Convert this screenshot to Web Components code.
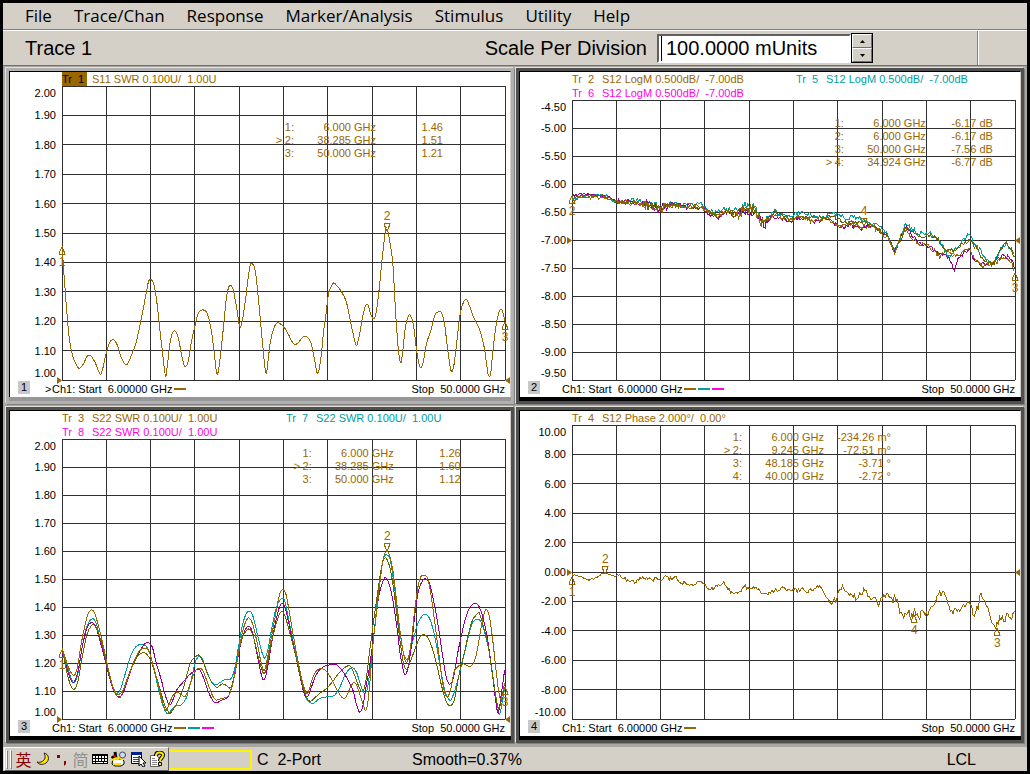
<!DOCTYPE html>
<html lang="en">
<head>
<meta charset="utf-8">
<title>Network Analyzer</title>
<style>
    body {
        margin: 0;
        background: #000;
    }
</style>
</head>
<body>
<analyzer-app></analyzer-app>

<script>
const BROWN = '#996600';
const TEAL = '#009e9e';
const MAGENTA = '#ff00e6';
const PURPLE = '#960096';
const OLIVE = '#666600';

/* Every plot is 1330 units wide; x and y of a trace are shifted by its origin. */
const PLOT_WIDTH = 1330;

const windows = [
    {
        id: 1,
        active: true,
        height: 880,
        legend: [{ name: 'Tr  1', text: 'S11 SWR 0.100U/  1.00U', color: BROWN, selected: true }],
        scale: ['2.00', '1.90', '1.80', '1.70', '1.60', '1.50', '1.40', '1.30', '1.20', '1.10', '1.00'],
        reference: 100,
        readout: {
            top: 12,
            right: 14,
            rows: [
                ['', '1:', '6.000 GHz', '1.46'],
                ['>', '2:', '38.285 GHz', '1.51'],
                ['', '3:', '50.000 GHz', '1.21'],
            ],
        },
        markers: [
            { label: '1', x: 0, y: 478, dir: 'up' },
            { label: '2', x: 976, y: 437, dir: 'down' },
            { label: '3', x: 1330, y: 704, dir: 'up' },
        ],
        origin: [187, -339],
        traces: [
            {
                color: BROWN,
                points: `187,140 190,180 194,240 205,380 211,430 218,465 228,492 238,506 250,495 263,469 274,469
                    287,490 301,523 309,508 320,460 331,427 342,421 353,436 366,476 381,496 393,473 409,430 425,358
                    440,280 447,246 455,240 463,256 472,310 482,400 490,470 498,529 504,490 513,420 520,398 528,395
                    536,415 545,460 551,488 557,501 566,485 576,425 587,375 597,340 610,331 622,340 634,385 643,450
                    652,522 660,490 670,400 680,300 686,268 693,257 702,275 712,330 718,370 723,382 730,355 738,300
                    746,235 752,197 758,193 767,213 777,300 788,420 799,520 806,480 812,430 820,395 830,372 840,371
                    855,385 868,407 880,430 890,434 900,425 910,412 922,411 935,432 945,480 955,522 965,470 972,400
                    980,340 987,285 995,262 1003,250 1013,260 1025,275 1040,305 1052,360 1065,420 1072,437 1080,405
                    1090,350 1098,320 1106,317 1114,345 1123,358 1130,340 1138,280 1148,180 1156,110 1161,85
                    1168,110 1180,190 1188,330 1196,440 1204,490 1210,455 1217,390 1225,355 1232,347 1242,375
                    1250,440 1257,485 1264,505 1272,485 1282,430 1295,390 1307,345 1316,338 1325,337 1335,370
                    1345,450 1355,513 1363,500 1372,430 1380,360 1388,320 1400,300 1410,318 1422,352 1440,388
                    1455,445 1466,522 1474,522 1480,460 1490,380 1500,335 1508,332 1517,365`,
            },
        ],
    },
    {
        id: 2,
        height: 840,
        legend: [
            { name: 'Tr  2', text: 'S12 LogM 0.500dB/  -7.00dB', color: BROWN },
            { name: 'Tr  5', text: 'S12 LogM 0.500dB/  -7.00dB', color: TEAL },
            { name: 'Tr  6', text: 'S12 LogM 0.500dB/  -7.00dB', color: MAGENTA },
        ],
        scale: ['-4.50', '-5.00', '-5.50', '-6.00', '-6.50', '-7.00', '-7.50', '-8.00', '-8.50', '-9.00', '-9.50'],
        reference: 50,
        readout: {
            top: 6,
            right: 5,
            rows: [
                ['', '1:', '6.000 GHz', '-6.17 dB'],
                ['', '2:', '6.000 GHz', '-6.17 dB'],
                ['', '3:', '50.000 GHz', '-7.56 dB'],
                ['>', '4:', '34.924 GHz', '-6.77 dB'],
            ],
        },
        markers: [
            { label: '2', x: 0, y: 286, dir: 'up' },
            { label: '4', x: 877, y: 382, dir: 'down' },
            { label: '3', x: 1330, y: 516, dir: 'up' },
        ],
        origin: [37, -209],
        noise: (x) => ((x > 215 && x < 285) || (x > 480 && x < 590) ? 15 : x < 130 ? 4 : 7),
        traces: [
            {
                color: TEAL,
                points: `37,90 60,78 90,78 120,76 145,80 165,94 190,96 215,92 240,93 260,105 290,110 320,106 350,104
                    380,104 410,102 425,104 440,120 470,128 490,120 505,118 520,128 540,118 560,110 585,112 600,135
                    615,155 630,138 645,122 660,132 685,138 710,133 740,132 770,142 800,142 820,132 840,135 865,148
                    880,142 905,148 930,158 955,168 980,190 995,220 1006,245 1020,210 1035,170 1042,165 1055,178
                    1070,185 1090,192 1110,188 1130,200 1150,228 1165,258 1175,255 1195,235 1210,210 1225,198
                    1240,210 1260,240 1280,265 1300,282 1315,260 1330,230 1340,222 1355,240 1367,265`,
            },
            {
                color: PURPLE,
                points: `37,80 60,72 90,76 120,76 150,84 170,96 190,90 220,98 250,102 275,112 305,116 340,102 370,110
                    400,112 430,115 450,138 475,146 500,128 530,140 550,126 585,122 600,145 615,165 635,138 660,145
                    690,155 730,142 765,158 790,148 815,152 840,175 870,168 905,178 935,170 960,182 985,202 1006,245
                    1025,200 1040,175 1060,200 1085,225 1115,230 1140,255 1160,255 1175,275 1185,297 1195,265
                    1215,248 1230,238 1245,270 1265,283 1290,287 1310,270 1335,255 1355,268 1367,295`,
            },
            {
                color: OLIVE,
                points: `37,88 60,80 90,80 120,77 145,82 165,95 190,98 220,96 250,102 270,112 300,114 330,106 360,106
                    390,110 425,110 440,122 465,136 485,132 505,120 525,132 545,122 580,118 600,138 615,160 630,145
                    645,124 665,140 690,146 730,140 760,144 790,145 820,140 850,155 880,158 910,158 935,168 960,178
                    985,200 1006,250 1020,215 1040,175 1060,190 1085,205 1110,195 1130,202 1145,220 1160,240
                    1180,242 1200,230 1215,218 1230,212 1250,235 1270,270 1300,287 1320,245 1340,220 1355,235
                    1367,270`,
            },
            {
                color: BROWN,
                points: `37,100 60,82 90,84 120,85 150,87 175,98 210,99 240,102 265,112 300,118 330,108 365,110
                    400,112 430,114 450,130 475,142 500,125 530,140 550,124 585,120 600,148 615,168 635,138 660,142
                    690,152 730,140 765,156 800,146 840,168 870,162 905,172 935,170 960,185 985,205 1006,250
                    1025,195 1040,180 1060,210 1085,225 1110,230 1140,260 1160,240 1185,260 1205,250 1230,235
                    1245,265 1265,290 1290,285 1310,278 1335,260 1355,275 1367,305`,
            },
        ],
    },
    {
        id: 3,
        height: 840,
        legend: [
            { name: 'Tr  3', text: 'S22 SWR 0.100U/  1.00U', color: BROWN },
            { name: 'Tr  7', text: 'S22 SWR 0.100U/  1.00U', color: TEAL },
            { name: 'Tr  8', text: 'S22 SWR 0.100U/  1.00U', color: MAGENTA },
        ],
        scale: ['2.00', '1.90', '1.80', '1.70', '1.60', '1.50', '1.40', '1.30', '1.20', '1.10', '1.00'],
        reference: 100,
        readout: {
            top: 3,
            right: 10,
            rows: [
                ['', '1:', '6.000 GHz', '1.26'],
                ['>', '2:', '38.285 GHz', '1.60'],
                ['', '3:', '50.000 GHz', '1.12'],
            ],
        },
        markers: [
            { label: '1', x: 0, y: 630, dir: 'up' },
            { label: '2', x: 977, y: 339, dir: 'down' },
            { label: '3', x: 1330, y: 742, dir: 'up' },
        ],
        origin: [37, -242],
        traces: [
            {
                color: TEAL,
                points: `37,390 50,430 62,470 74,488 86,455 98,380 112,320 127,298 138,308 150,350 162,400 175,450
                    188,500 200,520 212,510 226,465 243,410 258,382 275,374 290,380 303,408 318,470 332,530 345,570
                    356,583 365,572 380,557 396,555 410,535 425,480 438,425 450,410 460,420 472,455 485,485 498,496
                    512,488 525,480 543,478 555,450 567,380 578,320 590,282 602,275 612,295 625,350 638,400 647,415
                    655,390 668,320 680,265 692,240 703,238 710,262 725,335 740,410 755,480 770,535 782,549 793,550
                    810,537 830,532 855,527 870,505 885,470 898,450 910,444 922,460 935,500 946,522 955,500 965,420
                    975,330 985,230 995,150 1004,112 1012,106 1022,120 1035,200 1048,310 1060,390 1072,420 1082,395
                    1094,350 1105,312 1117,290 1130,284 1140,295 1150,325 1162,380 1174,450 1186,510 1200,541
                    1210,530 1223,490 1238,430 1250,380 1262,330 1272,305 1282,300 1294,305 1308,345 1322,410
                    1335,500 1345,560 1351,583 1358,550 1366,505`,
            },
            {
                color: PURPLE,
                points: `37,395 50,440 62,478 73,488 86,450 98,380 112,325 125,309 138,320 150,360 165,415 180,475
                    195,518 208,532 220,520 236,475 252,430 270,395 285,373 297,370 308,382 320,430 335,480 348,530
                    360,556 370,540 382,510 400,488 420,465 440,451 452,452 464,480 478,520 490,543 500,550 515,542
                    535,532 548,495 560,440 572,380 585,335 597,320 608,335 620,390 634,460 644,480 655,440 668,360
                    682,290 692,258 701,252 710,275 725,345 740,415 755,485 765,525 775,530 785,505 800,465 820,442
                    840,436 860,435 875,448 895,480 910,510 920,550 930,577 940,560 950,500 962,430 975,330 988,230
                    1000,185 1008,174 1018,190 1030,240 1042,320 1052,400 1060,445 1067,465 1077,440 1087,370
                    1098,270 1108,210 1120,182 1130,178 1140,190 1150,230 1165,310 1180,410 1190,470 1200,493
                    1212,475 1225,400 1240,330 1252,285 1265,258 1278,251 1290,262 1305,310 1318,380 1330,470
                    1340,550 1347,580 1355,530 1366,450`,
            },
            {
                color: OLIVE,
                points: `37,385 50,450 62,495 74,509 86,480 98,410 112,345 125,318 135,317 148,345 160,385 175,450
                    190,505 205,532 215,528 232,480 250,435 268,405 285,400 298,412 315,455 330,505 345,555 360,580
                    370,570 385,545 400,510 412,465 425,425 440,410 450,407 462,430 475,465 488,490 502,503 518,493
                    530,497 543,504 555,470 567,400 580,350 592,332 602,330 614,360 628,420 640,458 648,455 658,410
                    670,350 682,305 692,280 700,276 710,300 725,355 740,415 755,480 770,530 782,545 795,535 810,522
                    830,507 850,485 870,458 890,441 903,440 915,465 930,505 940,515 950,480 960,400 973,300 985,215
                    995,150 1002,120 1012,118 1025,160 1038,250 1050,350 1062,430 1072,448 1085,420 1098,385
                    1110,355 1123,345 1136,355 1150,390 1163,440 1177,500 1190,545 1202,558 1215,540 1230,460
                    1245,400 1258,340 1270,300 1282,285 1290,280 1302,320 1315,370 1330,470 1342,545 1350,565
                    1358,530 1366,490`,
            },
            {
                color: BROWN,
                points: `37,385 50,425 62,455 74,467 84,440 95,370 110,300 118,277 127,271 136,282 148,325 160,375
                    172,430 185,485 197,517 208,524 220,512 235,475 252,428 268,395 285,385 298,395 310,435 325,490
                    338,545 350,573 358,555 370,528 382,519 395,524 406,531 416,510 430,470 440,450 455,447 465,465
                    478,500 490,530 500,541 515,537 535,530 548,500 560,440 570,380 582,325 592,300 600,296 610,315
                    622,365 634,425 644,453 655,410 668,340 680,275 690,225 698,211 706,215 712,235 725,310 740,395
                    755,470 768,515 775,520 785,490 795,462 808,448 820,447 835,460 850,485 865,515 880,535 890,532
                    902,505 914,488 925,505 938,545 948,572 955,550 962,480 970,380 980,290 990,200 1000,125 1008,98
                    1018,100 1030,150 1040,230 1050,320 1060,390 1068,425 1076,420 1085,370 1095,280 1105,205
                    1114,172 1124,168 1134,175 1144,220 1155,300 1168,400 1178,480 1188,525 1196,530 1205,505
                    1215,455 1230,437 1245,433 1262,441 1275,425 1285,385 1295,325 1305,280 1312,270 1320,290
                    1330,360 1340,450 1348,515 1354,540 1360,520 1366,490`,
            },
        ],
    },
    {
        id: 4,
        height: 882,
        legend: [{ name: 'Tr  4', text: 'S12 Phase 2.000°/  0.00°', color: BROWN }],
        scale: ['10.00', '8.00', '6.00', '4.00', '2.00', '0.00', '-2.00', '-4.00', '-6.00', '-8.00', '-10.00'],
        reference: 50,
        readout: {
            top: 2,
            right: 28,
            rows: [
                ['', '1:', '6.000 GHz', '-234.26 m°'],
                ['>', '2:', '9.245 GHz', '-72.51 m°'],
                ['', '3:', '48.185 GHz', '-3.71 °'],
                ['', '4:', '40.000 GHz', '-2.72 °'],
            ],
        },
        markers: [
            { label: '1', x: 0, y: 454, dir: 'up' },
            { label: '2', x: 100, y: 449, dir: 'down' },
            { label: '4', x: 1028, y: 566, dir: 'up' },
            { label: '3', x: 1277, y: 606, dir: 'up' },
        ],
        origin: [172, -344],
        noise: (x) => (x < 130 ? 2 : x < 750 ? 6 : x < 950 ? 9 : 14),
        traces: [
            {
                color: BROWN,
                points: `172,105 190,108 205,113 220,121 235,118 250,112 262,102 270,100 285,105 305,110 318,104
                    322,115 335,120 345,126 365,127 375,117 390,112 400,118 415,122 425,117 440,120 450,108 457,112
                    465,118 485,115 495,125 510,130 525,138 540,132 552,126 567,132 575,145 590,148 600,142 612,138
                    628,131 640,145 650,160 662,164 680,153 690,140 700,147 715,144 730,147 745,160 757,163 770,155
                    790,150 805,143 820,150 835,146 850,155 862,150 880,158 895,148 910,138 920,143 930,160 940,185
                    950,198 960,182 968,178 973,150 985,143 998,152 1010,175 1020,170 1028,180 1040,160 1052,150
                    1062,170 1072,172 1085,182 1093,203 1100,180 1108,172 1123,163 1135,178 1145,172 1155,205
                    1163,215 1171,236 1180,218 1190,235 1197,220 1208,210 1217,228 1225,215 1235,218 1248,210
                    1255,188 1265,180 1268,165 1280,160 1290,160 1300,185 1310,215 1322,222 1335,210 1345,200
                    1355,188 1367,208 1380,218 1392,198 1402,162 1415,185 1425,215 1435,245 1447,258 1460,238
                    1475,238 1482,220 1490,240 1502,225`,
            },
        ],
    },
];

function parsePoints(text, [ox, oy]) {
    return text.trim().split(/\s+/).map((pair) => {
        const [x, y] = pair.split(',').map(Number);
        return [x - ox, y - oy];
    });
}

/* Catmull-Rom spline through the points, written as cubic segments */
function smoothPath(pts) {
    let d = `M${pts[0]}`;
    for (let i = 0; i < pts.length - 1; i++) {
        const p0 = pts[i - 1] || pts[i];
        const p1 = pts[i];
        const p2 = pts[i + 1];
        const p3 = pts[i + 2] || p2;
        d += `C${p1[0] + (p2[0] - p0[0]) / 6},${p1[1] + (p2[1] - p0[1]) / 6} `
            + `${p2[0] - (p3[0] - p1[0]) / 6},${p2[1] - (p3[1] - p1[1]) / 6} ${p2}`;
    }
    return d;
}

/* Straight segments with repeatable measurement noise on top */
function noisyPath(pts, amplitude, seed) {
    let state = seed * 7919;
    const random = () => {
        state = (state * 1103515245 + 12345) % 2147483648;
        return state / 2147483648 - 0.5;
    };
    let d = `M${pts[0]}`;
    let i = 0;
    for (let x = pts[0][0] + 4; x <= PLOT_WIDTH; x += 4) {
        while (i < pts.length - 2 && pts[i + 1][0] < x) i++;
        const [x1, y1] = pts[i];
        const [x2, y2] = pts[i + 1];
        const y = y1 + (y2 - y1) * (x - x1) / (x2 - x1) + random() * 2 * amplitude(x);
        d += `L${x},${y.toFixed(1)}`;
    }
    return d;
}

function define(name, html, setup) {
    const template = document.createElement('template');
    template.innerHTML = html;

    customElements.define(name, class extends HTMLElement {
        constructor() {
            super();
            this.attachShadow({ mode: 'open' });
            this.shadowRoot.appendChild(template.content.cloneNode(true));
            if (setup) setup(this, this.shadowRoot);
        }
    });
}

define('menu-bar', `
    <style>
        :host {
            display: flex;
            align-items: center;
            gap: 22px;
            height: 26px;
            padding: 0 22px;
            border-bottom: 1px solid #808080;
            box-shadow: 0 1px 0 #fff;
            margin-bottom: 1px;
            background: #d4d0c8;
        }
        ::slotted(button) {
            border: 0;
            padding: 0;
            background: none;
            color: #000;
            font: 17px/24px "Open Sans", sans-serif;
        }
    </style>
    <slot></slot>
`);

define('scale-toolbar', `
    <style>
        :host {
            display: flex;
            align-items: center;
            height: 34px;
            background: #d4d0c8;
            font-size: 20px;
        }
        .title {
            margin-left: 22px;
            flex: 1;
        }
        label { margin-right: 10px; }
        input {
            box-sizing: border-box;
            width: 194px;
            height: 29px;
            border: 2px solid;
            border-color: #606060 #fff #fff #606060;
            border-radius: 0;
            padding: 0 0 0 7px;
            background: linear-gradient(#000, #000) 2px 0 / 1px 100% no-repeat #fff;
            font: 20px "Liberation Sans", Arial, sans-serif;
            color: #000;
            outline: 0;
        }
        .spin {
            display: grid;
            grid-template-rows: 1fr 1fr;
            box-sizing: border-box;
            width: 22px;
            height: 30px;
            border: 1px solid #000;
        }
        .spin button {
            display: flex;
            align-items: center;
            justify-content: center;
            padding: 0;
            border: 1px solid;
            border-color: #fff #707070 #707070 #fff;
            background: #d4d0c8;
        }
        .end {
            align-self: stretch;
            width: 49px;
            margin-left: 104px;
            border-left: 1px solid #808080;
            box-shadow: inset 1px 0 0 #fff;
        }
    </style>
    <span class="title"><slot></slot></span>
    <label for="scale">Scale Per Division</label>
    <input id="scale" type="text" value="100.0000 mUnits">
    <span class="spin">
        <button type="button" aria-label="Increase"><svg width="5" height="3"><path d="M0 3L2.500 0L5 3z"/></svg></button>
        <button type="button" aria-label="Decrease"><svg width="5" height="3"><path d="M0 0L2.500 3L5 0z"/></svg></button>
    </span>
    <span class="end"></span>
`, (host, root) => {
    const input = root.querySelector('input');
    const [up, down] = root.querySelectorAll('button');
    const step = (delta) => {
        input.value = `${(parseFloat(input.value) + delta).toFixed(4)} mUnits`;
    };
    up.addEventListener('click', () => step(10));
    down.addEventListener('click', () => step(-10));
});

define('plot-marker', `
    <style>
        :host {
            position: absolute;
            display: flex;
            flex-direction: column;
            align-items: center;
            transform: translateX(-50%);
            color: #996600;
            font-size: 12px;
            line-height: 12px;
        }
        :host([dir="down"]) {
            flex-direction: column-reverse;
            transform: translate(-50%, -100%);
        }
        :host([dir="down"]) svg { transform: scaleY(-1); }
        svg { display: block; margin: 1px 0; }
    </style>
    <svg width="7" height="8" fill="none" stroke="currentColor" shape-rendering="crispEdges"><path d="M3.500 0L1 5.500V7.500H6V5.500zM0 7.500H7"/></svg>
    <slot></slot>
`);

define('trace-window', `
    <style>
        :host {
            --frame: #505050;
            --strip: #000;
            display: flex;
            flex-direction: column;
            min-width: 0;
            border: 3px solid var(--frame);
            box-shadow: -1px -1px 0 #e4e0d8, 1px 1px 0 #808080;
            font-size: 11px;
            line-height: 14px;
        }
        :host([active]) {
            --frame: #b0b0b0;
            --strip: #979797;
        }
        section {
            flex: 1;
            display: grid;
            grid-template-columns: 52px minmax(0, 1fr);
            grid-template-rows: auto minmax(0, 1fr) 17px;
            padding-right: 5px;
            border: 1px solid #000;
            border-right-color: #d4d0c8;
            border-bottom: 0;
            background: #fff;
        }
        .strip {
            height: 4px;
            background: var(--strip);
        }
        .legend {
            grid-column: 2;
            display: grid;
            grid-template-columns: 224px 1fr;
            white-space: pre;
        }
        .legend div { display: flex; }
        .legend b {
            font-weight: normal;
            width: 25px;
            margin-right: 5px;
        }
        .legend .selected {
            background: #996600;
            color: #000;
        }
        .scale {
            display: grid;
            grid-template-rows: 1fr repeat(9, 2fr) 1fr;
            align-items: center;
            justify-items: end;
            padding-right: 6px;
        }
        .scale span { margin: -7px 0; }
        .scale span:first-child { align-self: start; margin: 0; }
        .scale span:last-child { align-self: end; margin: 0; }
        .plot { position: relative; }
        .plot > svg {
            position: absolute;
            width: 100%;
            height: 100%;
            overflow: visible;
        }
        path, line { vector-effect: non-scaling-stroke; }
        .grid { stroke: #303034; }
        table {
            position: absolute;
            border-collapse: collapse;
            color: #996600;
            line-height: 13px;
            white-space: nowrap;
            text-align: right;
        }
        td { padding: 0; }
        td:nth-child(1) { width: 9px; text-align: left; }
        td:nth-child(2) { width: 9px; text-align: left; }
        td:nth-child(3) { width: 82px; }
        td:nth-child(4) { width: 67px; }
        .ref {
            position: absolute;
            width: 5px;
            height: 7px;
            margin-top: -3px;
            background: #996600;
        }
        .ref.left { right: 100%; clip-path: polygon(0 0, 100% 50%, 0 100%); }
        .ref.right { left: 100%; clip-path: polygon(100% 0, 0 50%, 100% 100%); }
        footer {
            grid-column: 1 / 3;
            display: flex;
            align-items: center;
            white-space: pre;
        }
        .badge {
            width: 12px;
            margin: 0 15px 3px 8px;
            background: #c8c8c8;
            text-align: center;
            line-height: 13px;
        }
        .caret { width: 7px; }
        .dash {
            width: 12px;
            height: 2px;
            margin-right: 2px;
        }
        .dash:first-of-type { margin-left: 2px; }
        .stop { margin-left: auto; }
    </style>
    <section>
        <div class="legend"></div>
        <div class="scale"></div>
        <div class="plot"></div>
        <footer></footer>
    </section>
    <div class="strip"></div>
`, (host, root) => {
    host.render = (data) => {
        host.toggleAttribute('active', Boolean(data.active));

        root.querySelector('.legend').innerHTML = data.legend.map((item) =>
            `<div style="color: ${item.color}"><b class="${item.selected ? 'selected' : ''}">${item.name}</b>${item.text}</div>`).join('');

        root.querySelector('.scale').innerHTML = data.scale.map((text) => `<span>${text}</span>`).join('');

        let grid = '';
        for (let i = 0; i <= 10; i++) {
            const x = PLOT_WIDTH * i / 10;
            const y = data.height * i / 10;
            grid += `<line x1="${x}" y1="0" x2="${x}" y2="${data.height}"/><line x1="0" y1="${y}" x2="${PLOT_WIDTH}" y2="${y}"/>`;
        }
        const traces = data.traces.map((trace, i) => {
            const pts = parsePoints(trace.points, data.origin);
            const d = data.noise ? noisyPath(pts, data.noise, i + 3) : smoothPath(pts);
            return `<path d="${d}" stroke="${trace.color}"/>`;
        }).join('');
        const rows = data.readout.rows.map((row) =>
            `<tr>${row.map((cell) => `<td>${cell.replace('>', '&gt;')}</td>`).join('')}</tr>`).join('');
        const markers = data.markers.map((m) =>
            `<plot-marker dir="${m.dir}" style="left: ${m.x / PLOT_WIDTH * 100}%; top: ${m.y / data.height * 100}%">${m.label}</plot-marker>`).join('');

        root.querySelector('.plot').innerHTML = `
            <svg viewBox="0 0 ${PLOT_WIDTH} ${data.height}" preserveAspectRatio="none" fill="none" shape-rendering="crispEdges">
                <g class="grid">${grid}</g>${traces}
            </svg>
            <table style="top: ${data.readout.top}%; right: ${data.readout.right}%">${rows}</table>
            <span class="ref left" style="top: ${data.reference}%"></span>
            <span class="ref right" style="top: ${data.reference}%"></span>
            ${markers}`;

        root.querySelector('footer').innerHTML = `
            <span class="badge">${data.id}</span><span class="caret">${data.active ? '&gt;' : ''}</span>Ch1: Start  6.00000 GHz<i class="dash" style="background: ${BROWN}"></i>${
            data.legend.slice(1).map((item) => `<i class="dash" style="background: ${item.color}"></i>`).join('')
        }<span class="stop">Stop  50.0000 GHz</span>`.trim();
    };
});

define('input-bar', `
    <style>
        :host {
            display: flex;
            align-items: center;
            box-sizing: border-box;
            width: 165px;
            height: 24px;
            border: 1px solid;
            border-color: #fff #606060 #606060 #fff;
            background: #d4d0c8;
        }
        .grip {
            width: 2px;
            height: 19px;
            border: 1px solid;
            border-color: #fff #808080 #808080 #fff;
            box-sizing: border-box;
            margin-left: 1px;
        }
        .grip + .grip { margin: 0 2px 0 2px; }
        button {
            display: flex;
            align-items: center;
            justify-content: center;
            width: 19px;
            height: 20px;
            padding: 0;
            border: 0;
            background: none;
            color: #8b0000;
            font: 16px/16px "Noto Sans CJK SC", sans-serif;
        }
        .off { color: #909090; }
    </style>
    <i class="grip"></i><i class="grip"></i>
    <button type="button">英</button>
    <button type="button" aria-label="Half width"><svg width="14" height="14"><path d="M8 1c5 1 6 7 2 10c-3 2-7 2-9-1c4 1 7-1 8-4c0-2 0-4-1-5z" fill="#ffe600" stroke="#222"/></svg></button>
    <button type="button" aria-label="Punctuation"><svg width="12" height="14"><path d="M1 3h3v3H1zM8 9h2v3l-2 2v-2z" fill="#8b0000"/></svg></button>
    <button type="button" class="off">简</button>
    <button type="button" aria-label="Keyboard"><svg width="16" height="12" shape-rendering="crispEdges"><path d="M0 1h16v10H0z"/><path d="M1 3.500h14M1 6.500h14" stroke="#fff" stroke-width="2" stroke-dasharray="2 1"/><path d="M1 9.500h2M4 9.500h7M12 9.500h3" stroke="#fff"/></svg></button>
    <button type="button" aria-label="Tools"><svg width="16" height="16"><path d="M2 8h9l2 2v3l-3 2H4l-3-2z" fill="#fff" stroke="#000"/><path d="M3 8L1 5M5 8L4 1" stroke="#000" stroke-width="3"/><path d="M5 8L3 4" stroke="#e00000" stroke-width="2"/><path d="M1 9l5-2M2 13h8" stroke="#ffe600" stroke-width="2"/><path d="M6 9l3-4M12 9l-3-2" stroke="#ffe600" stroke-width="2"/><circle cx="11.500" cy="4" r="3" fill="#cde" stroke="#446"/></svg></button>
    <button type="button" aria-label="Menu"><svg width="16" height="16"><path d="M1.500 2.500h10v10h-10z" fill="#fff" stroke="#000"/><path d="M1 1h11v3H1z" fill="#002090"/><path d="M3 6.500h7M3 8.500h6M3 10.500h6" stroke="#444"/><path d="M9 5v10l2-2l2 3l2-1l-2-3h3z" fill="#fff" stroke="#000"/></svg></button>
    <button type="button" aria-label="Help"><svg width="16" height="16"><path d="M1.500 4.500h6l3 3v8h-9z" fill="#fff" stroke="#606060"/><path d="M3 7.500h3M3 9.500h5M3 11.500h5M3 13.500h5" stroke="#888"/><path d="M7 5c0-5 7-4 7-1c0 3-3 3-3 6" fill="none" stroke="#000" stroke-width="4"/><path d="M7 5c0-5 7-4 7-1c0 3-3 3-3 6" fill="none" stroke="#ffe600" stroke-width="2"/><path d="M9.500 11.500h3v3h-3z" fill="#ffe600" stroke="#000"/></svg></button>
`);

define('status-bar', `
    <style>
        :host {
            display: flex;
            align-items: center;
            height: 24px;
            background: #d4d0c8;
            font-size: 16px;
            white-space: pre;
        }
        input-bar { flex: none; margin-left: 1px; }
        .message {
            box-sizing: border-box;
            width: 83px;
            height: 20px;
            margin: 2px 5px 0 0;
            border: 2px solid #fff200;
            border-left: 0;
        }
        ::slotted(*) {
            flex: 1;
            display: flex;
            margin-top: 2px;
        }
    </style>
    <input-bar></input-bar><span class="message"></span><slot></slot>
`);

define('analyzer-app', `
    <style>
        :host {
            display: flex;
            flex-direction: column;
            box-sizing: border-box;
            min-height: 100vh;
            border: 3px solid #000;
            font-family: "Liberation Sans", Arial, sans-serif;
            color: #000;
        }
        main {
            flex: 1;
            display: grid;
            grid-template-columns: repeat(2, minmax(0, 1fr));
            grid-template-rows: repeat(2, minmax(200px, 1fr));
            gap: 3px 2px;
            padding: 3px 3px 4px 3px;
            background: #a8a6a0;
            box-shadow: inset 0 1px 0 #707070;
        }
        .port { width: 155px; }
        .smooth { flex: 1; }
        .mode { margin-right: 51px; }
    </style>
    <menu-bar>
        <button type="button">File</button>
        <button type="button">Trace/Chan</button>
        <button type="button">Response</button>
        <button type="button">Marker/Analysis</button>
        <button type="button">Stimulus</button>
        <button type="button">Utility</button>
        <button type="button">Help</button>
    </menu-bar>
    <scale-toolbar>Trace 1</scale-toolbar>
    <main></main>
    <status-bar>
        <div><span class="port">C  2-Port</span><span class="smooth">Smooth=0.37%</span><span class="mode">LCL</span></div>
    </status-bar>
`, (host, root) => {
    const main = root.querySelector('main');
    windows.forEach((data) => {
        const pane = document.createElement('trace-window');
        pane.render(data);
        main.appendChild(pane);
    });
});
</script>
</body>
</html>
